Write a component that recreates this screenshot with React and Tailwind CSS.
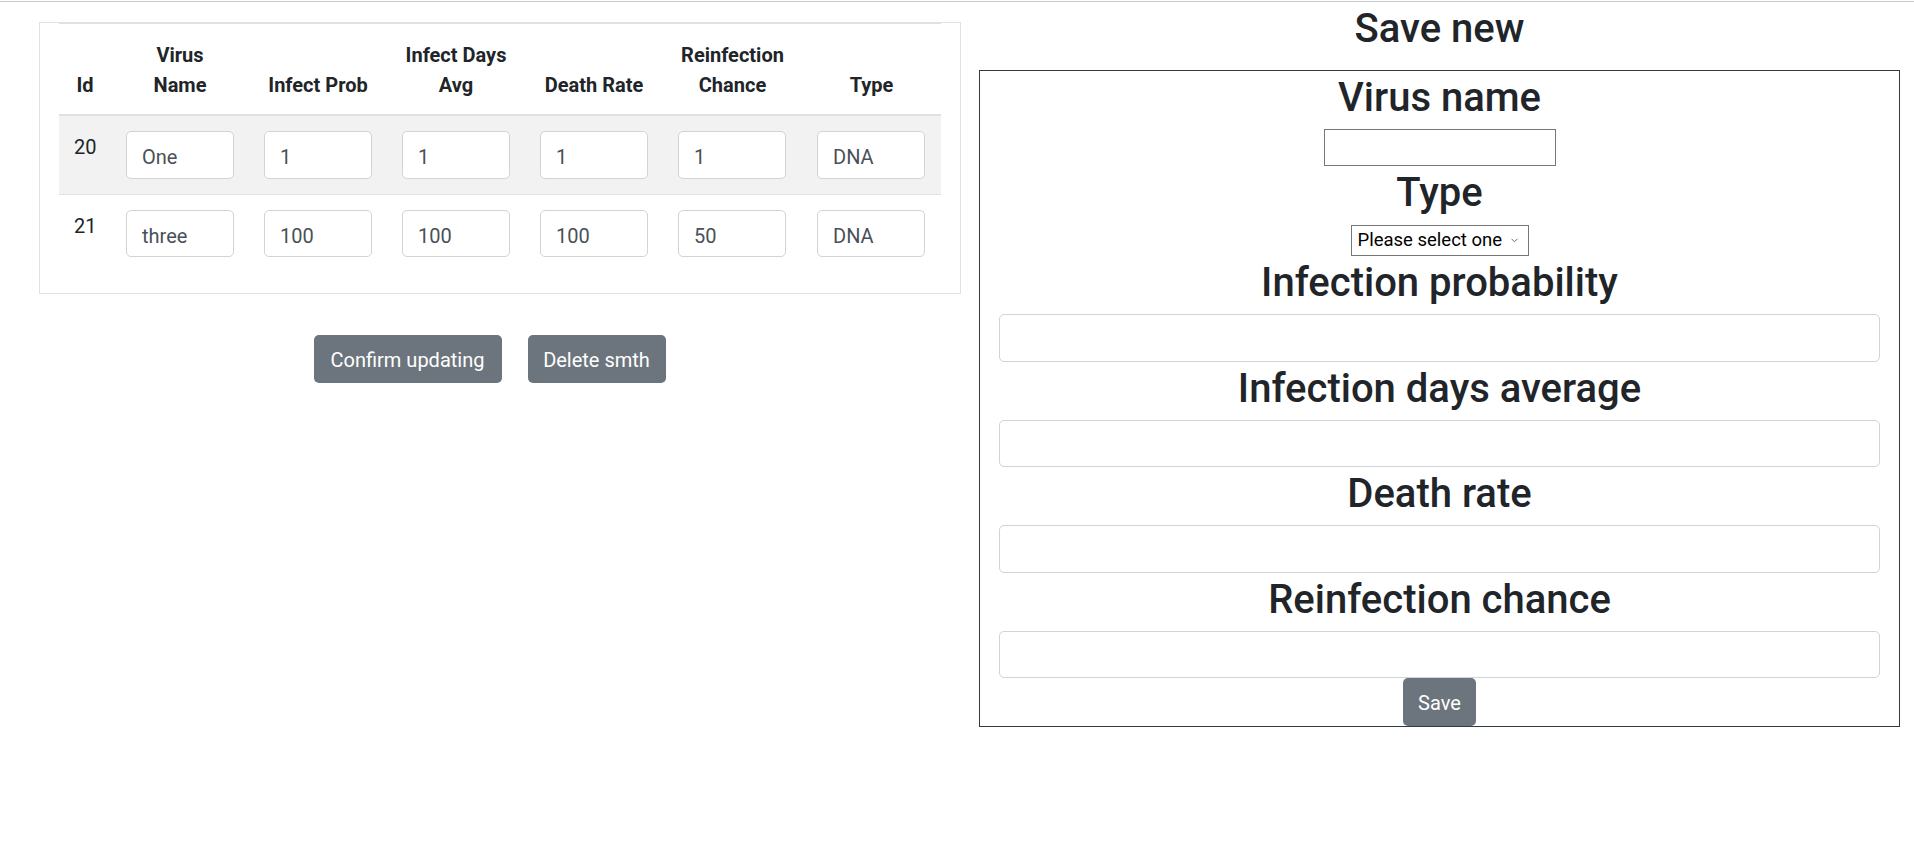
import React from "react";

const rows = [
  { id: 20, name: "One", prob: "1", days: "1", death: "1", re: "1", type: "DNA" },
  { id: 21, name: "three", prob: "100", days: "100", death: "100", re: "50", type: "DNA" },
];

const grid = "grid grid-cols-[52px_138px_138px_138px_138px_139px_139px]";

function Cell({ value }) {
  return (
    <div className="p-[15px]">
      <input
        readOnly
        value={value}
        className="block w-[107.5px] h-[47.5px] border border-[#ced4da] rounded-[5px] bg-white px-[15px] pt-[10px] pb-[5px] text-[20px] leading-[30px] text-[#495057] outline-none"
      />
    </div>
  );
}

function Th({ children }) {
  return (
    <div className="flex items-end justify-center px-[15px] pt-[16px] pb-[14px] text-center font-bold leading-[30px]">
      <span>{children}</span>
    </div>
  );
}

function Heading({ children, className = "" }) {
  return (
    <h2 className={`h-[48px] pt-[3px] text-[40px] leading-[48px] font-medium text-center ${className}`}>
      {children}
    </h2>
  );
}

function Field({ label }) {
  return (
    <>
      <Heading className="mb-[10px]">{label}</Heading>
      <input className="block w-full h-[47.5px] border border-[#ced4da] rounded-[5px] bg-white px-[15px] text-[20px] outline-none" />
    </>
  );
}

export default function App() {
  return (
    <div className="min-h-screen bg-white text-[#212529] text-[20px] leading-[30px] font-['Roboto','Liberation_Sans',sans-serif]">
      <div className="h-px mt-px bg-[#c6c9cc]" />
      <div className="flex">
        {/* Left column */}
        <div className="w-[979px] shrink-0">
          <div className="ml-[39px] mt-[20px] w-[922px] border border-[#dee2e6] px-[19px]">
            <div className="mb-[21px]">
              <div className={`${grid} border-t border-[#dee2e6] border-b-2 border-b-[#dee2e6]`}>
                <Th>Id</Th>
                <Th>Virus<br />Name</Th>
                <Th>Infect Prob</Th>
                <Th>Infect Days<br />Avg</Th>
                <Th>Death Rate</Th>
                <Th>Reinfection<br />Chance</Th>
                <Th>Type</Th>
              </div>
              {rows.map((r, i) => (
                <div
                  key={r.id}
                  className={`${grid} ${i === 0 ? "bg-[#f2f2f2]" : "border-t border-[#dee2e6]"}`}
                >
                  <div className="px-[15px] pt-[16px] leading-[30px]">{r.id}</div>
                  <Cell value={r.name} />
                  <Cell value={r.prob} />
                  <Cell value={r.days} />
                  <Cell value={r.death} />
                  <Cell value={r.re} />
                  <Cell value={r.type} />
                </div>
              ))}
            </div>
          </div>
          <div className="mt-[41px] flex justify-center gap-[26px]">
            <button className="w-[188px] h-[47.5px] rounded-[5px] bg-[#6c757d] text-white text-[20px] leading-[30px] pt-[2px]">
              Confirm updating
            </button>
            <button className="w-[138px] h-[47.5px] rounded-[5px] bg-[#6c757d] text-white text-[20px] leading-[30px] pt-[2px]">
              Delete smth
            </button>
          </div>
        </div>

        {/* Right column */}
        <div className="w-[921px] shrink-0">
          <h2 className="mt-[3px] mb-[17px] text-[40px] leading-[48px] font-medium text-center">Save new</h2>
          <div className="border border-[#343a40] px-[19px] flex flex-col">
            <Heading className="mb-[10px]">Virus name</Heading>
            <input className="block mx-auto w-[232px] h-[37px] border border-[#767676] bg-white px-[2px] text-[20px] outline-none" />
            <Heading className="mb-[11px]">Type</Heading>
            <div className="relative mx-auto w-[178px] h-[31px]">
              <select className="appearance-none block w-full h-full border border-[#767676] bg-white pl-[6px] pr-[20px] text-[18.5px] leading-[27px] text-black outline-none">
                <option>Please select one</option>
                <option>DNA</option>
                <option>RNA</option>
              </select>
              <svg
                className="absolute right-[11px] top-[13px] pointer-events-none"
                width="7"
                height="5"
                viewBox="0 0 7 5"
                fill="none"
              >
                <path d="M0.5 0.8 L3.5 3.8 L6.5 0.8" stroke="#6e6e6e" strokeWidth="1" />
              </svg>
            </div>
            <Field label="Infection probability" />
            <Field label="Infection days average" />
            <Field label="Death rate" />
            <Field label="Reinfection chance" />
            <button className="mx-auto w-[73px] h-[47.5px] rounded-[5px] bg-[#6c757d] text-white text-[20px] leading-[30px] pt-[2px]">
              Save
            </button>
          </div>
        </div>
      </div>
    </div>
  );
}
